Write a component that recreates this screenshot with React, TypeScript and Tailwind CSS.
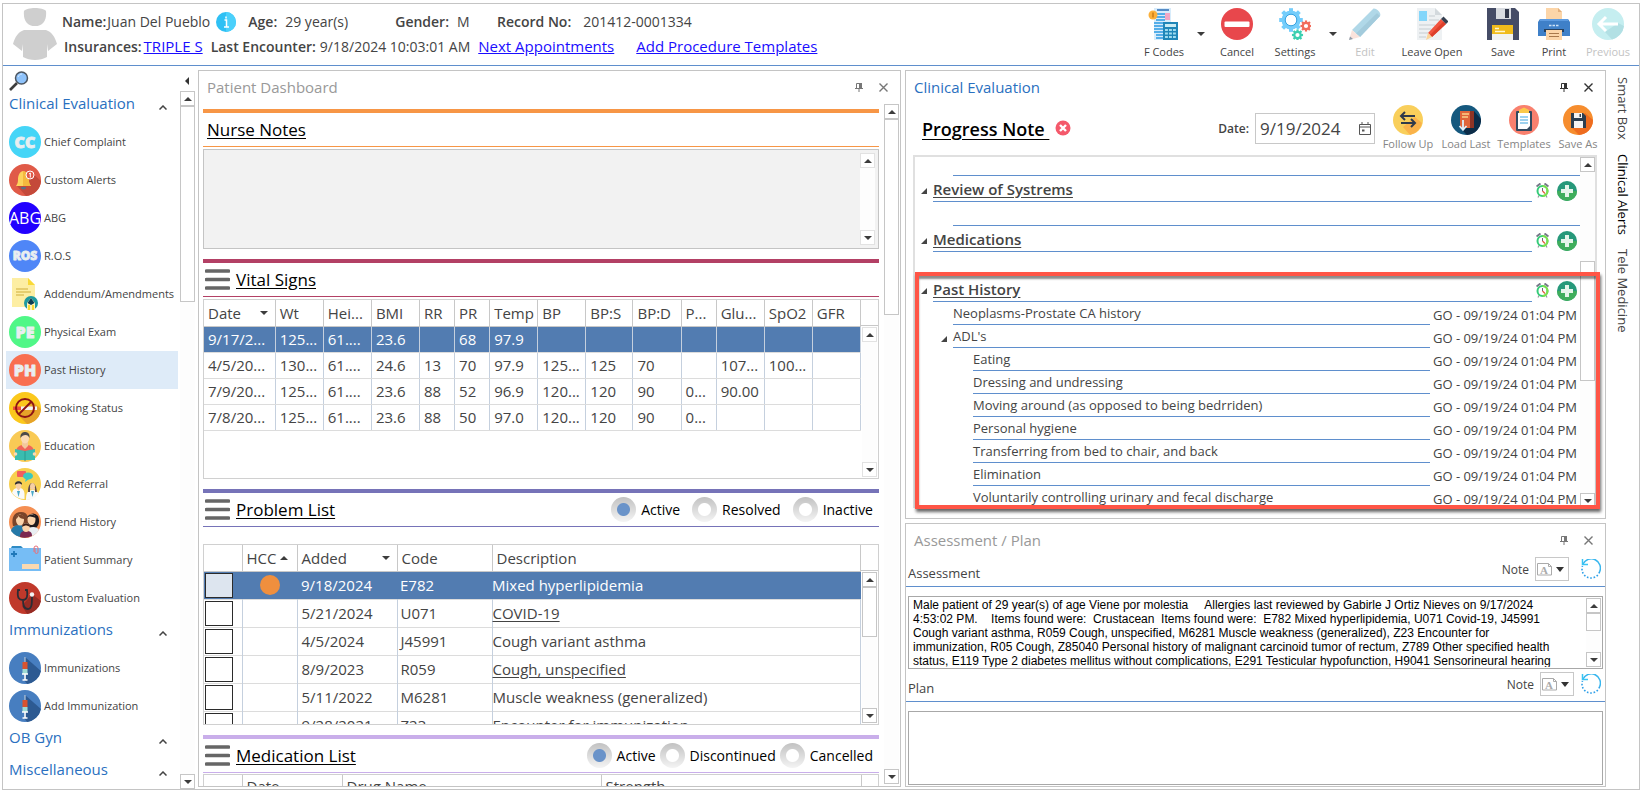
import React, { useState } from 'react';

const Dot: React.FC<{ fill: string; children?: React.ReactNode }> = ({ fill, children }) => (
  <svg viewBox="0 0 32 32" className="w-8 h-8 shrink-0">
    <circle cx="16" cy="16" r="16" fill={fill} />
    {children}
  </svg>
);

const LetterDot: React.FC<{ fill: string; text: string; size?: number; weight?: number; color?: string }> = ({ fill, text, size = 16, weight = 800, color = '#e9eef0' }) => (
  <Dot fill={fill}>
    <text
      x="16"
      y={16 + size * 0.36}
      textAnchor="middle"
      fontFamily="Open Sans, sans-serif"
      fontSize={size}
      fontWeight={weight}
      fill={color}
      stroke={color}
      strokeWidth={weight > 400 ? 0.8 : 0}
      strokeLinejoin="round"
    >
      {text}
    </text>
  </Dot>
);

const BellIcon = () => (
  <Dot fill="#e05a48">
    <path d="M8 22 L24 10 L32 17 A16 16 0 0 1 17 32 Z" fill="#c4493a" />
    <path d="M14 7c-4 1-5 5-5 9 0 3-1 4-2 6h15c-2-2-2-4-2-6 0-4-1-8-6-9z" fill="#fdd35c" />
    <path d="M14 7v15h8c-2-2-2-4-2-6 0-4-1-8-6-9z" fill="#f5b83e" />
    <path d="M12 23h5a2.500 2.500 0 0 1-5 0z" fill="#5a6f85" />
    <circle cx="21" cy="11" r="4" fill="#e05a48" stroke="#fff" strokeWidth="1" />
    <path d="M20 10l1.300-1v4.500" stroke="#fff" strokeWidth="1" fill="none" />
  </Dot>
);

const AddendumIcon = () => (
  <svg viewBox="0 0 32 32" className="w-8 h-8 shrink-0">
    <path d="M3 0h16l7 7v22H3z" fill="#fdeea3" />
    <path d="M19 0l7 7h-7z" fill="#f9d937" />
    <path d="M7 11h12M7 14h15M7 17h8" stroke="#cfae3c" strokeWidth="1.200" />
    <circle cx="22" cy="25" r="7" fill="#1f9aa0" />
    <path d="M18 32v-7l4-5 4 5v7z" fill="#fff3b8" />
    <path d="M18.500 25l3.500-5 3.500 5-3.500 2z" fill="#0e3e52" />
    <path d="M20 27v5M24 27v5" stroke="#f9d937" strokeWidth="2" />
  </svg>
);

const SmokingIcon = () => (
  <Dot fill="#fbc81c">
    <path d="M23 9l9 8a16 16 0 0 1-14 15l-8-8z" fill="#e6a329" />
    <rect x="4" y="14.500" width="8" height="3.500" fill="#f0503c" />
    <rect x="12" y="14.500" width="16" height="3.500" fill="#f4f4f4" />
    <circle cx="16" cy="16" r="9" fill="none" stroke="#8e1414" strokeWidth="2" />
    <path d="M22.500 9.500l-13 13" stroke="#8e1414" strokeWidth="2" />
  </Dot>
);

const EducationIcon = () => (
  <Dot fill="#f9ca55">
    <path d="M7 21c1-5 4-6 9-6s8 1 9 6z" fill="#f0645a" />
    <path d="M13 11h6v5l-3 3-3-3z" fill="#f3c79c" />
    <ellipse cx="16" cy="8.500" rx="4" ry="5" fill="#fbd9b5" />
    <path d="M11.500 8C11 3 14 2 16 2c3 0 5 2 4.500 6-1-2-2-3-4-3s-4 1-5 3z" fill="#4d4a4a" />
    <path d="M6 19l10 2 10-2v11H6z" fill="#3abdb0" />
    <path d="M16 21v10" stroke="#2a9a90" strokeWidth="1" />
    <circle cx="6.500" cy="24" r="1.800" fill="#fbd9b5" />
    <circle cx="25.500" cy="24" r="1.800" fill="#fbd9b5" />
  </Dot>
);

const ReferralIcon = () => (
  <Dot fill="#f8d04e">
    <rect x="8" y="3" width="9" height="6" rx="1" fill="#f25f5c" />
    <ellipse cx="19" cy="8" rx="5" ry="3.600" fill="#3cc9be" />
    <path d="M17 10l-1 4 4-3z" fill="#3cc9be" />
    <path d="M3 25c1-4 3-5 6.500-5s5.500 1 6 6v5A16 16 0 0 1 3 25z" fill="#fafafa" />
    <path d="M17 31c0-6 2-9 6.500-9 3 0 5 1 6 4A16 16 0 0 1 17 32z" fill="#fafafa" />
    <path d="M7 19h5l-2.500 4z" fill="#f6cfa5" />
    <ellipse cx="9.500" cy="17" rx="3" ry="3.800" fill="#f6cfa5" />
    <path d="M6 17c-1-5 8-5 7 0-1-2-5-2-7 0z" fill="#333" />
    <path d="M19 24c0-12 8-12 9 0h-2v-4h-5v4z" fill="#5d4a4c" />
    <ellipse cx="23.500" cy="18.500" rx="2.500" ry="3.500" fill="#f6cfa5" />
    <path d="M8 23l1.500 6 1.500-6zM22 23l1.500 6 1.500-6z" fill="#49a8c9" />
  </Dot>
);

const FriendIcon = () => (
  <Dot fill="#f58f52">
    <path d="M17 16a7 8 0 0 1 12-6c2 5 1 9-2 12h-9z" fill="#1f1a1d" />
    <path d="M4 20c-2-8 1-14 8-14s8 6 7 13z" fill="#7a4429" />
    <path d="M2 25c1-5 5-6 9-6s6 3 6 8v4A16 16 0 0 1 2 25z" fill="#2579a8" />
    <path d="M19 22c6-2 9-1 11 2a16 16 0 0 1-10 7z" fill="#e9eef2" />
    <ellipse cx="11" cy="14" rx="4" ry="5.500" fill="#fbd3aa" />
    <path d="M6.500 13c1-5 8-6 9 0-3 0-5-1-6-3-1 2-2 3-3 3z" fill="#7a4429" />
    <ellipse cx="22.500" cy="13.500" rx="4" ry="5.500" fill="#fbd3aa" />
    <path d="M18 12c1-4 7-5 9 0-4-1-6-3-9 0z" fill="#1f1a1d" />
    <path d="M11 31c0-5 2-6 6-6s6 1 6 5a16 16 0 0 1-12 1z" fill="#7c2850" />
    <ellipse cx="17" cy="21.500" rx="3.800" ry="4.500" fill="#fbd3aa" />
    <path d="M13 21c0-5 8-5 8 0-3-2-5-2-8 0z" fill="#3b1e16" />
  </Dot>
);

const SummaryIcon = () => (
  <svg viewBox="0 0 32 32" className="w-8 h-8 shrink-0">
    <path d="M2 4l1-2h9l2 2v3H2z" fill="#2f8bc4" />
    <rect x="0" y="4" width="32" height="23" fill="#76bdf5" />
    <path d="M5 7v6M2 10h6" stroke="#1f77b8" strokeWidth="1.800" />
    <rect x="13" y="20" width="17" height="5" fill="#fbd9b0" />
    <path d="M25 8V4a2 2 0 0 1 4 0v4a1.500 1.500 0 0 1-3 0V4" stroke="#e8707a" fill="none" strokeWidth="1" />
  </svg>
);

const StethoscopeIcon = () => (
  <Dot fill="#c0392b">
    <path d="M13 24l10-12 9 7a16 16 0 0 1-14 13z" fill="#962b23" />
    <path d="M11 8H9c-1 8 1 10 5 10s5-4 4-10h-2M14 18c0 6 1 9 5 9s4-6 4-13" fill="none" stroke="#2c2c34" strokeWidth="1.800" />
    <circle cx="23" cy="12.500" r="2.200" fill="#f3f3f3" />
  </Dot>
);

const SyringeIcon = () => (
  <Dot fill="#477ec0">
    <path d="M16 5l16 14a16 16 0 0 1-14 13l-3-4z" fill="#2d5a92" />
    <path d="M16 5v6" stroke="#cfd8e0" strokeWidth="1" />
    <rect x="13.500" y="10" width="5" height="7" fill="#d9532f" />
    <rect x="13.500" y="17" width="5" height="5" fill="#9fdad3" />
    <path d="M16 22v6M13.500 28h5M13 22h6" stroke="#fff" strokeWidth="1.600" />
  </Dot>
);

const sections = [
  {
    title: 'Clinical Evaluation',
    items: [
      { label: 'Chief Complaint', icon: <LetterDot fill="#45d5f7" text="CC" size={16} /> },
      { label: 'Custom Alerts', icon: <BellIcon /> },
      { label: 'ABG', icon: <LetterDot fill="#2200ff" text="ABG" size={16} weight={400} color="#fff" /> },
      { label: 'R.O.S', icon: <LetterDot fill="#4f86f7" text="ROS" size={12} /> },
      { label: 'Addendum/Amendments', icon: <AddendumIcon /> },
      { label: 'Physical Exam', icon: <LetterDot fill="#50f787" text="PE" size={16} /> },
      { label: 'Past History', icon: <LetterDot fill="#f96f50" text="PH" size={16} />, active: true },
      { label: 'Smoking Status', icon: <SmokingIcon /> },
      { label: 'Education', icon: <EducationIcon /> },
      { label: 'Add Referral', icon: <ReferralIcon /> },
      { label: 'Friend History', icon: <FriendIcon /> },
      { label: 'Patient Summary', icon: <SummaryIcon /> },
      { label: 'Custom Evaluation', icon: <StethoscopeIcon /> },
    ],
  },
  {
    title: 'Immunizations',
    items: [
      { label: 'Immunizations', icon: <SyringeIcon /> },
      { label: 'Add Immunization', icon: <SyringeIcon /> },
    ],
  },
  { title: 'OB Gyn', items: [] },
  { title: 'Miscellaneous', items: [] },
];

const vitalCols = [
  { name: 'Date', width: 'w-[71px]' },
  { name: 'Wt', width: 'w-12' },
  { name: 'Hei...', width: 'w-12' },
  { name: 'BMI', width: 'w-12' },
  { name: 'RR', width: 'w-[35px]' },
  { name: 'PR', width: 'w-[35px]' },
  { name: 'Temp', width: 'w-12' },
  { name: 'BP', width: 'w-12' },
  { name: 'BP:S', width: 'w-[47px]' },
  { name: 'BP:D', width: 'w-12' },
  { name: 'P...', width: 'w-[35px]' },
  { name: 'Glu...', width: 'w-12' },
  { name: 'SpO2', width: 'w-12' },
  { name: 'GFR', width: 'w-12' },
];

const vitals = [
  ['9/17/2...', '125...', '61....', '23.6', '', '68', '97.9', '', '', '', '', '', '', ''],
  ['4/5/20...', '130...', '61....', '24.6', '13', '70', '97.9', '125...', '125', '70', '', '107...', '100...', ''],
  ['7/9/20...', '125...', '61....', '23.6', '88', '52', '96.9', '120...', '120', '90', '0...', '90.00', '', ''],
  ['7/8/20...', '125...', '61....', '23.6', '88', '50', '97.0', '120...', '120', '90', '0...', '', '', ''],
];

const problems = [
  { added: '9/18/2024', code: 'E782', text: 'Mixed hyperlipidemia', hcc: true },
  { added: '5/21/2024', code: 'U071', text: 'COVID-19', link: true },
  { added: '4/5/2024', code: 'J45991', text: 'Cough variant asthma' },
  { added: '8/9/2023', code: 'R059', text: 'Cough, unspecified', link: true },
  { added: '5/11/2022', code: 'M6281', text: 'Muscle weakness (generalized)' },
  { added: '9/28/2021', code: 'Z23', text: 'Encounter for immunization' },
];

const historyRows = [
  { text: 'Neoplasms-Prostate CA history', level: 1 },
  { text: "ADL's", level: 1, open: true },
  { text: 'Eating', level: 2 },
  { text: 'Dressing and undressing', level: 2 },
  { text: 'Moving around (as opposed to being bedrriden)', level: 2 },
  { text: 'Personal hygiene', level: 2 },
  { text: 'Transferring from bed to chair, and back', level: 2 },
  { text: 'Elimination', level: 2 },
  { text: 'Voluntarily controlling urinary and fecal discharge', level: 2 },
];

const assessmentText = [
  'Male patient of 29 year(s) of age Viene por molestia     Allergies last reviewed by Gabirle J Ortiz Nieves on 9/17/2024',
  '4:53:02 PM.    Items found were:  Crustacean  Items found were:  E782 Mixed hyperlipidemia, U071 Covid-19, J45991',
  'Cough variant asthma, R059 Cough, unspecified, M6281 Muscle weakness (generalized), Z23 Encounter for',
  'immunization, R05 Cough, Z85040 Personal history of malignant carcinoid tumor of rectum, Z789 Other specified health',
  'status, E119 Type 2 diabetes mellitus without complications, E291 Testicular hypofunction, H9041 Sensorineural hearing',
].join('\n');

const Tri: React.FC<{ up?: boolean }> = ({ up }) => (
  <svg viewBox="0 0 8 4" className="w-2 h-1 shrink-0">
    <path d={up ? 'M0 4h8L4 0z' : 'M0 0h8L4 4z'} fill="#3c3c3c" />
  </svg>
);

const Corner = () => (
  <svg viewBox="0 0 6 6" className="w-1.5 h-1.5 shrink-0">
    <path d="M6 0v6H0z" fill="#444" />
  </svg>
);

// WPF looking scroll bar: two arrow buttons, optional thumb
const ScrollBar: React.FC<{ thumb?: string; offset?: string; light?: boolean }> = ({ thumb, offset = 'h-0', light }) => {
  const btn = `w-[15px] h-[15px] shrink-0 border flex items-center justify-center bg-white ${light ? 'border-[#e2e2e2]' : 'border-[#c6c6c6]'}`;
  return (
    <div className="w-[15px] shrink-0 flex flex-col bg-[#fdfdfd]">
      <button aria-label="Scroll up" className={btn}><Tri up /></button>
      <div className="flex-1 min-h-0 flex flex-col overflow-hidden">
        <div className={`shrink-0 ${offset}`} />
        {thumb && <div className={`shrink-0 border border-[#c6c6c6] bg-white ${thumb}`} />}
      </div>
      <button aria-label="Scroll down" className={btn}><Tri /></button>
    </div>
  );
};

const PanelTitle: React.FC<{ title: string; active?: boolean }> = ({ title, active }) => (
  <div className={`h-[33px] shrink-0 flex items-center pl-2 pr-3 ${active ? 'text-[#2a70c0]' : 'text-[#999]'}`}>
    <h2 className="flex-1 text-[15px]">{title}</h2>
    <div className={`flex gap-4 items-center ${active ? 'text-[#333]' : 'text-[#777]'}`}>
      <button aria-label="Pin">
        <svg viewBox="0 0 8 9" className="w-2 h-[9px]">
          <path d="M1.500 .5h5v5h-5zM0 5.500h8M4 5.500V9" fill="none" stroke="currentColor" />
          <path d="M4 0h3v6H4z" fill="currentColor" />
        </svg>
      </button>
      <button aria-label="Close">
        <svg viewBox="0 0 9 9" className="w-[9px] h-[9px]">
          <path d="M.5 .5l8 8M8.500 .5l-8 8" stroke="currentColor" strokeWidth="1.400" />
        </svg>
      </button>
    </div>
  </div>
);

const Radios: React.FC<{ name: string; options: string[]; gap: string }> = ({ name, options, gap }) => {
  const [value, setValue] = useState(options[0]);
  return (
    <div className={`flex items-center text-sm ${gap}`}>
      {options.map((o) => (
        <label key={o} className="flex items-center gap-[5px]">
          <input
            type="radio"
            name={name}
            checked={value === o}
            onChange={() => setValue(o)}
            className="appearance-none w-[25px] h-[25px] rounded-full bg-[radial-gradient(circle,#fff_6px,transparent_7px),linear-gradient(#c2c2c2,#f4f4f4)] checked:bg-[radial-gradient(circle,#6a93c9_6px,transparent_7px),linear-gradient(#c2c2c2,#f4f4f4)]"
          />
          {o}
        </label>
      ))}
    </div>
  );
};

const Section: React.FC<{ title: string; bar: string; line: string; menu?: boolean; extra?: React.ReactNode; children: React.ReactNode }> = ({ title, bar, line, menu, extra, children }) => (
  <section className="shrink-0">
    <div className={`h-1 ${bar}`} />
    <div className={`h-[34px] border-b flex items-center pr-1.5 ${line}`}>
      {menu && (
        <button aria-label={`${title} menu`} className="ml-0.5 mr-1.5">
          <svg viewBox="0 0 25 21" className="w-[25px] h-[21px]">
            <path d="M1.500 2h22M1.500 10.500h22M1.500 19h22" stroke="#666" strokeWidth="3.600" strokeLinecap="round" />
          </svg>
        </button>
      )}
      <h3 className={`flex-1 text-[17px] text-black underline underline-offset-2 ${menu ? '' : 'pl-1'}`}>{title}</h3>
      {extra}
    </div>
    {children}
  </section>
);

const ToolButton: React.FC<{ label: string; width: string; disabled?: boolean; children: React.ReactNode }> = ({ label, width, disabled, children }) => (
  <button disabled={disabled} className={`flex flex-col items-center gap-[3px] text-[11px] leading-[18px] whitespace-nowrap ${width} ${disabled ? 'text-[#c3c3c3]' : 'text-[#444]'}`}>
    <svg viewBox="0 0 32 32" className="w-8 h-8">{children}</svg>
    {label}
  </button>
);

const DropArrow = () => (
  <button aria-label="More" className="w-4 pt-6 flex justify-center"><Tri /></button>
);

const gearTeeth = (cx: number, cy: number, r: number, w: number) =>
  [0, 45, 90, 135, 180, 225, 270, 315].map((a) => (
    <rect key={a} x={cx - w / 2} y={cy - r - w * 0.7} width={w} height={w} transform={`rotate(${a} ${cx} ${cy})`} />
  ));

const Toolbar = () => (
  <div className="flex items-start pt-1 shrink-0">
    <ToolButton label="F Codes" width="w-[58px]">
      <path d="M6 0h17v32H6z" fill="#d8ecfb" />
      <path d="M9 2h12" stroke="#2d6cb5" strokeWidth="1.500" />
      <path d="M8 6h9M8 9h9M8 12h9M6 15h10M6 18h10M6 21h10M6 24h10M8 27h7M8 30h7" stroke="#55aee8" strokeWidth="1.800" />
      <path d="M17 5h5v7h-5z" fill="#f2a7c4" />
      <circle cx="5" cy="7" r="4.500" fill="#fbb03b" />
      <path d="M5 4.500v5" stroke="#c97812" strokeWidth="1.400" />
      <rect x="15" y="14" width="15" height="18" fill="#1f86b8" />
      <rect x="17" y="16" width="11" height="3" fill="#c9ecf5" />
      <path d="M17 22h11M17 25.500h11M17 29h11" stroke="#9fdcf0" strokeWidth="2.200" strokeDasharray="2.900 1.100" />
    </ToolButton>
    <DropArrow />
    <ToolButton label="Cancel" width="w-14">
      <circle cx="16" cy="16" r="16" fill="#e8474c" />
      <rect x="3.500" y="13.500" width="25" height="5.500" rx="1" fill="#fff" />
    </ToolButton>
    <ToolButton label="Settings" width="w-[60px]">
      <g fill="#74cdfb">{gearTeeth(12, 12, 9, 4)}</g>
      <circle cx="12" cy="12" r="7.500" fill="none" stroke="#74cdfb" strokeWidth="4" />
      <circle cx="12" cy="12" r="5.800" fill="none" stroke="#3ba3e0" strokeWidth="1" />
      <g fill="#f26b5b">{gearTeeth(27, 18, 4, 2.200)}</g>
      <circle cx="27" cy="18" r="3.200" fill="none" stroke="#f26b5b" strokeWidth="2.200" />
      <g fill="#3ccfb0">{gearTeeth(18.500, 27, 4, 2.200)}</g>
      <circle cx="18.500" cy="27" r="3.200" fill="none" stroke="#3ccfb0" strokeWidth="2.200" />
    </ToolButton>
    <DropArrow />
    <ToolButton label="Edit" width="w-12" disabled>
      <path d="M3 22L24 1c2-2 9 4 7 7L11 29z" fill="#b0d8e8" />
      <path d="M7 25.500L28 5l3 3-20 21z" fill="#a3cbdc" />
      <path d="M3 22l8 7-11 3z" fill="#fbe3dc" />
      <path d="M1 28.500L0 32l4-1z" fill="#8f9dab" />
    </ToolButton>
    <ToolButton label="Leave Open" width="w-[86px]">
      <path d="M1 0h18l7 7v25H1z" fill="#eef1f3" />
      <path d="M19 0l7 7h-7z" fill="#d3d9dd" />
      <rect x="3" y="3" width="8" height="10" fill="#84d6fa" />
      <path d="M13 8h6M13 12h10M3 17h16M3 21h12M3 25h9M3 29h7" stroke="#d3d9dd" strokeWidth="1.500" />
      <path d="M12 25L25 11l5 5-14 13z" fill="#f1543f" />
      <path d="M14 27L27.500 13.500 30 16 16 29z" fill="#dd3f2b" />
      <path d="M25 11l2.500-2.500 5 5L30 16z" fill="#354050" />
      <path d="M12 25l4 4-6 3z" fill="#fbd59a" />
    </ToolButton>
    <ToolButton label="Save" width="w-14">
      <path d="M0 0h28l4 4v28H0z" fill="#454c66" />
      <rect x="9" y="0" width="15" height="11" fill="#d8dbe0" />
      <rect x="18" y="1" width="4" height="9" fill="#2f3548" />
      <rect x="5" y="17" width="21" height="15" fill="#f2f2f2" />
      <rect x="5" y="17" width="21" height="9" fill="#f0bb1c" />
      <path d="M8 20.500h4M8 23.500h10" stroke="#fff6d2" strokeWidth="1.300" />
    </ToolButton>
    <ToolButton label="Print" width="w-[46px]">
      <path d="M8 0h12l4 4v9H8z" fill="#fcd5a8" />
      <path d="M20 0l4 4h-4z" fill="#e3b07d" />
      <path d="M2 11h28l2 3v14H0V14z" fill="#3f80c8" />
      <path d="M2 11h28v2H2z" fill="#5d9be0" />
      <path d="M11 17.500h10" stroke="#cfe2f7" strokeWidth="1.400" strokeDasharray="2.500 1" />
      <rect x="6" y="21" width="20" height="3" fill="#27415f" />
      <rect x="8" y="22" width="16" height="10" fill="#fcd5a8" />
      <path d="M11 25.500h10M11 28.500h10" stroke="#a9794c" strokeWidth="1.200" />
    </ToolButton>
    <ToolButton label="Previous" width="w-[62px]" disabled>
      <circle cx="16" cy="16" r="16" fill="#c5eef0" />
      <path d="M13 24l13-9 6 3a16 16 0 0 1-12 13.500z" fill="#b2e0e4" />
      <path d="M26 16H7M14 9l-7 7 7 7" stroke="#fff" strokeWidth="3" fill="none" />
    </ToolButton>
  </div>
);

const Header = () => (
  <header className="h-[62px] shrink-0 border-b border-[#5f8fcd] flex pl-[9px] text-sm text-[#444]">
    <svg viewBox="0 0 46 52" className="w-[46px] h-[52px] mt-1 shrink-0">
      <path d="M12 3c3-4 19-4 22 0 1 9-3 15-11 15S11 12 12 3z" fill="#cfcfcf" />
      <path d="M12 22h22c6 2 9 7 11 14l-9 7-1-7v13c-7 4-17 4-24 0V36l-1 7-9-7c2-7 5-12 11-14z" fill="#cfcfcf" />
    </svg>
    <div className="flex-1 pl-1 pt-[5px] whitespace-nowrap">
      <div className="flex items-center h-[26px]">
        <b className="font-semibold mr-px">Name:</b>
        <span>Juan Del Pueblo</span>
        <svg viewBox="0 0 20 20" className="w-5 h-5 ml-1.5 mr-3">
          <circle cx="10" cy="10" r="10" fill="#2fc0f4" />
          <path d="M10 0a10 10 0 0 1 0 20z" fill="#4bd0fb" />
          <path d="M8.500 8h2v7M8 15h5M10 4.500v2" stroke="#fff" strokeWidth="1.500" fill="none" />
        </svg>
        <b className="font-semibold mr-2">Age:</b>
        <span className="w-[110px]">29 year(s)</span>
        <b className="font-semibold mr-2">Gender:</b>
        <span className="w-10">M</span>
        <b className="font-semibold mr-3">Record No:</b>
        <span>201412-0001334</span>
      </div>
      <div className="flex items-center h-6 pl-0.5">
        <b className="font-semibold mr-0.5">Insurances:</b>
        <a href="#" className="text-[#1a0dff] text-[15px] underline mr-2">TRIPLE S</a>
        <b className="font-semibold mr-1">Last Encounter:</b>
        <span className="mr-2">9/18/2024 10:03:01 AM</span>
        <a href="#" className="text-[#1a0dff] text-[15px] underline mr-[22px]">Next Appointments</a>
        <a href="#" className="text-[#1a0dff] text-[15px] underline">Add Procedure Templates</a>
      </div>
    </div>
    <Toolbar />
  </header>
);

const Sidebar = () => (
  <nav className="w-[195px] shrink-0 flex flex-col overflow-hidden">
    <div className="h-[21px] shrink-0 flex items-center justify-between pl-1.5 pr-[9px]">
      <svg viewBox="0 0 20 20" className="w-5 h-5">
        <path d="M1 19l7-7" stroke="#3d3d3d" strokeWidth="2.600" />
        <circle cx="12.500" cy="7" r="6" fill="#8fc3fb" stroke="#4c5560" strokeWidth="1.500" />
        <path d="M9 6c1-2 2-3 4-3" stroke="#d7ebff" fill="none" />
      </svg>
      <button aria-label="Collapse">
        <svg viewBox="0 0 4 8" className="w-1 h-2"><path d="M4 0v8L0 4z" fill="#333" /></svg>
      </button>
    </div>
    <div className="flex-1 min-h-0 flex pr-[3px]">
      <div className="flex-1 overflow-hidden">
        {sections.map((s) => (
          <div key={s.title}>
            <button className="w-full h-8 flex items-center justify-between pl-1.5 pr-[13px] text-[15px] text-[#2a70c0]">
              <span className="pb-2">{s.title}</span>
              <svg viewBox="0 0 8 5" className="w-2 h-[5px]"><path d="M.5 4.500L4 1l3.500 3.500" fill="none" stroke="#444" strokeWidth="1.500" /></svg>
            </button>
            {s.items.map((item) => (
              <button
                key={item.label}
                className={`w-[172px] h-[38px] ml-[3px] pl-[3px] flex items-center gap-[3px] text-[11px] text-[#444] whitespace-nowrap ${'active' in item && item.active ? 'bg-[#deebf8]' : ''}`}
              >
                {item.icon}
                {item.label}
              </button>
            ))}
          </div>
        ))}
      </div>
      <ScrollBar thumb="h-[196px]" />
    </div>
  </nav>
);

const Dashboard = () => {
  const [checked, setChecked] = useState<Record<string, boolean>>({});

  return (
    <div className="flex-1 min-w-0 border border-[#c4c4c4] flex flex-col">
      <PanelTitle title="Patient Dashboard" />
      <div className="flex-1 min-h-0 flex gap-[5px] pl-1 pr-px">
        <div className="flex-1 min-w-0 flex flex-col gap-2.5 pt-[5px] overflow-hidden">
          <Section title="Nurse Notes" bar="bg-[#f79646]" line="border-[#f79646]">
            <div className="mt-0.5 h-[100px] border border-[#c4c4c4] bg-[#f2f2f2] flex py-[3px] pr-[3px]">
              <textarea aria-label="Nurse Notes" className="flex-1 resize-none outline-none" />
              <ScrollBar light />
            </div>
          </Section>

          <Section title="Vital Signs" bar="bg-[#b34065]" line="border-[#b34065]" menu>
            <div className="mt-0.5 h-[180px] border border-[#d0d0d0] flex">
              <div className="flex-1 min-w-0">
                <table className="w-full table-fixed border-collapse text-[15px] text-[#444]">
                  <thead>
                    <tr className="h-[26px]">
                      {vitalCols.map((c) => (
                        <th key={c.name} className={`p-0 pl-1 font-normal text-left border-r border-b border-[#c8c8c8] whitespace-nowrap overflow-hidden ${c.width}`}>
                          {c.name === 'Date' ? <span className="flex items-center justify-between pr-[7px]">Date <Tri /></span> : c.name}
                        </th>
                      ))}
                    </tr>
                  </thead>
                  <tbody>
                    {vitals.map((row, i) => (
                      <tr key={row[0]} className={`h-[26px] ${i === 0 ? 'bg-[#527cb1] text-white' : ''}`}>
                        {row.map((cell, j) => (
                          <td key={j} className="p-0 pl-1 border-r border-b border-r-[#c5d0de] border-b-[#dcdcdc] whitespace-nowrap overflow-hidden">{cell}</td>
                        ))}
                      </tr>
                    ))}
                  </tbody>
                </table>
              </div>
              <div className="w-[17px] flex flex-col">
                <div className="h-[26px] border-b border-[#c8c8c8] shrink-0" />
                <div className="flex-1 flex p-px"><ScrollBar light /></div>
              </div>
            </div>
          </Section>

          <Section
            title="Problem List"
            bar="bg-[#7673b8]"
            line="border-[#7673b8]"
            menu
            extra={<Radios name="problems" options={['Active', 'Resolved', 'Inactive']} gap="gap-3" />}
          >
            <div className="mt-[17px] h-[181px] border border-[#d0d0d0] flex">
              <div className="flex-1 min-w-0 overflow-hidden">
                <table className="w-full table-fixed border-collapse text-[15px] text-[#444]">
                  <thead>
                    <tr className="h-[26px] text-left">
                      <th aria-label="Select" className="w-[38px] p-0 border-r border-b border-[#c8c8c8]" />
                      <th className="w-[55px] p-0 pl-1 font-normal border-r border-b border-[#c8c8c8]"><span className="flex items-center gap-1">HCC <Tri up /></span></th>
                      <th className="w-[100px] p-0 pl-1 font-normal border-r border-b border-[#c8c8c8]"><span className="flex items-center justify-between pr-[7px]">Added <Tri /></span></th>
                      <th className="w-[95px] p-0 pl-1 font-normal border-r border-b border-[#c8c8c8]">Code</th>
                      <th className="p-0 pl-1 font-normal border-r border-b border-[#c8c8c8]">Description</th>
                    </tr>
                  </thead>
                  <tbody>
                    {problems.map((p, i) => (
                      <tr key={p.code} className={`h-7 border-b border-[#dcdcdc] ${i === 0 ? 'bg-[#527cb1] text-white' : '[&>td]:border-r [&>td]:border-r-[#c5d0de]'}`}>
                        <td className="p-0 pl-px">
                          <input
                            type="checkbox"
                            aria-label={`Select ${p.text}`}
                            checked={!!checked[p.code]}
                            onChange={() => setChecked({ ...checked, [p.code]: !checked[p.code] })}
                            className={`block appearance-none w-7 h-[25px] border border-[#2b2b2b] checked:bg-[#527cb1] ${i === 0 ? 'bg-[#dde5ef]' : 'bg-white'}`}
                          />
                        </td>
                        <td className="p-0">{p.hcc && <span className="block mx-auto w-5 h-5 rounded-full bg-[#f08f3e]" />}</td>
                        <td className="p-0 pl-1">{p.added}</td>
                        <td className="p-0 pl-[3px]">{p.code}</td>
                        <td className="p-0 whitespace-nowrap">{p.link ? <a href="#" className="underline underline-offset-2">{p.text}</a> : p.text}</td>
                      </tr>
                    ))}
                  </tbody>
                </table>
              </div>
              <div className="w-[17px] flex flex-col">
                <div className="h-[26px] border-b border-[#c8c8c8] shrink-0" />
                <div className="flex-1 flex p-px"><ScrollBar thumb="h-[50px]" /></div>
              </div>
            </div>
          </Section>

          <Section
            title="Medication List"
            bar="bg-[#c9aeea]"
            line="border-[#c9aeea]"
            menu
            extra={<Radios name="medications" options={['Active', 'Discontinued', 'Cancelled']} gap="gap-1" />}
          >
            <div className="mt-px h-[180px] border border-[#d0d0d0]">
              <table className="w-full table-fixed border-collapse text-[15px] leading-5 text-[#444] text-left">
                <thead>
                  <tr className="h-[22px]">
                    <th aria-label="Select" className="w-[38px] p-0 border-r border-[#c8c8c8]" />
                    <th className="w-[100px] p-0 pl-1 font-normal border-r border-[#c8c8c8]">Date</th>
                    <th className="w-[259px] p-0 pl-1 font-normal border-r border-[#c8c8c8]">Drug Name</th>
                    <th className="p-0 pl-1 font-normal border-r border-[#c8c8c8]">Strength</th>
                    <th aria-label="Scroll" className="w-[17px] p-0" />
                  </tr>
                </thead>
              </table>
            </div>
          </Section>
        </div>
        <div className="flex pb-0.5"><ScrollBar thumb="h-[196px]" /></div>
      </div>
    </div>
  );
};

const NoteButton: React.FC<{ label: string; width?: string; children: React.ReactNode }> = ({ label, width = 'w-[58px]', children }) => (
  <button className={`flex flex-col items-center text-[11px] leading-[18px] text-[#858585] whitespace-nowrap ${width}`}>
    <svg viewBox="0 0 30 30" className="w-[30px] h-[30px]">{children}</svg>
    {label}
  </button>
);

const SectionRow: React.FC<{ title: string }> = ({ title }) => (
  <div className="h-[26px] flex">
    <div className="w-[18px] flex items-center justify-end pr-1.5 pt-1"><Corner /></div>
    <div className="flex-1 border-b border-[#5f8fcd] flex items-center">
      <h4 className="font-semibold text-[15px] leading-5 underline underline-offset-2">{title}</h4>
    </div>
    <div className="w-12 flex items-center justify-end gap-2 pr-[3px] pt-[3px]">
      <svg viewBox="0 0 13 15" className="w-[13px] h-[15px]">
        <path d="M.5 3.500l4-3M12.500 3.500l-4-3" stroke="#778" strokeWidth="2" />
        <path d="M3 12.500l-1 2M10 12.500l1 2" stroke="#999" strokeWidth="1.200" />
        <circle cx="6.500" cy="8" r="5" fill="#fff" stroke="#35cc78" strokeWidth="2" />
        <path d="M6.500 3a5 5 0 0 1 0 10" fill="none" stroke="#7fe04a" strokeWidth="2" />
        <path d="M6.500 5v3" stroke="#667" fill="none" />
        <path d="M6.500 8l2.500 2.500" stroke="#e05a3c" strokeWidth="1.200" fill="none" />
      </svg>
      <button aria-label={`Add to ${title}`}>
        <svg viewBox="0 0 20 20" className="w-5 h-5 block">
          <circle cx="10" cy="10" r="10" fill="#27997a" />
          <path d="M0 10h20a10 10 0 0 1-20 0z" fill="#3fae5c" />
          <path d="M10 4v12M4 10h12" stroke="#e6f5ea" strokeWidth="4" />
        </svg>
      </button>
    </div>
  </div>
);

const ClinicalPanel = () => {
  const [date, setDate] = useState('9/19/2024');

  return (
    <div className="flex-1 min-h-0 border border-[#c4c4c4] flex flex-col">
      <PanelTitle title="Clinical Evaluation" active />
      <div className="h-[51px] shrink-0 flex items-start pl-4">
        <h1 className="text-lg leading-[50px] font-semibold text-black underline underline-offset-3 whitespace-pre">Progress Note </h1>
        <button aria-label="Remove note" className="pt-4 pl-1.5">
          <svg viewBox="0 0 16 16" className="w-4 h-4">
            <circle cx="8" cy="8" r="7.500" fill="#f4596b" />
            <path d="M5 5l6 6M11 5l-6 6" stroke="#fff" strokeWidth="2.400" />
          </svg>
        </button>
        <div className="flex-1" />
        <label htmlFor="note-date" className="text-xs font-semibold text-[#444] leading-[50px] mr-1.5">Date:</label>
        <div className="mt-[9px] w-[120px] h-[31px] border border-[#c8c8c8] flex items-center pl-1 pr-[3px]">
          <input id="note-date" value={date} onChange={(e) => setDate(e.target.value)} className="flex-1 min-w-0 text-[17px] text-[#444] outline-none" />
          <button aria-label="Open calendar">
            <svg viewBox="0 0 12 13" className="w-3 h-[13px]">
              <path d="M.5 2.500h11v10H.5zM.5 5h11M3 0v2.500M9 0v2.500" fill="none" stroke="#555" />
              <path d="M3 7.500h2.500v2H3z" fill="#555" />
            </svg>
          </button>
        </div>
        <div className="flex pl-1 pr-0.5 pt-px">
          <NoteButton label="Follow Up">
            <circle cx="15" cy="15" r="15" fill="#f9cf5b" />
            <path d="M10 22l12-10 7 6A15 15 0 0 1 17 30z" fill="#fab24a" />
            <path d="M22 11H9M12 7l-4 4 4 4M8 18h13M18 14l4 4-4 4" fill="none" stroke="#2f3a4a" strokeWidth="2" />
          </NoteButton>
          <NoteButton label="Load Last">
            <circle cx="15" cy="15" r="15" fill="#15587e" />
            <path d="M10 24L23 6l7 8a15 15 0 0 1-14 16z" fill="#0c2c48" />
            <rect x="9" y="6" width="13" height="17" fill="#e0653a" />
            <path d="M19 6h4v17h-4z" fill="#8f3425" />
            <path d="M11 9h7M11 12h6" stroke="#fcd28a" strokeWidth="1.400" />
            <path d="M12 15v9M8.500 21l3.500 4 3.500-4" stroke="#dff0fb" strokeWidth="1.800" fill="none" />
          </NoteButton>
          <NoteButton label="Templates">
            <circle cx="15" cy="15" r="15" fill="#f9806e" />
            <rect x="7" y="6" width="16" height="20" rx="1" fill="#34495e" />
            <path d="M9 8h12v13l-3 3H9z" fill="#fff" />
            <path d="M11 12h8M11 15h8M11 18h8" stroke="#7fc4ea" strokeWidth="1.300" />
            <path d="M10 8V5l5-2.500L20 5v3z" fill="#fbc94a" />
          </NoteButton>
          <NoteButton label="Save As" width="w-[50px]">
            <circle cx="15" cy="15" r="15" fill="#f68d2e" />
            <path d="M8 22L22 8l8 7a15 15 0 0 1-14 15z" fill="#ee6c1f" />
            <path d="M8 8h12l3 3v12H8z" fill="#2c3e50" />
            <path d="M11 8h8v5h-8zM11 16h9v7h-9z" fill="#f4f4f4" />
            <path d="M16.500 9h1.500v3h-1.500z" fill="#2c3e50" />
          </NoteButton>
        </div>
      </div>

      <div className="relative flex-1 min-h-0 ml-[7px] mr-2 mb-2.5 border-2 border-[#e0e0e0] border-b-0 flex text-[#444]">
        <div className="flex-1 min-w-0 overflow-hidden">
          <div className="h-[19px] ml-[38px] border-b border-[#5f8fcd]" />
          <SectionRow title="Review of Systrems" />
          <div className="h-6 ml-[38px] border-b border-[#5f8fcd]" />
          <SectionRow title="Medications" />
          <div className="h-6 ml-[38px] border-b border-[#5f8fcd]" />
          <SectionRow title="Past History" />
          {historyRows.map((row) => (
            <div key={row.text} className={`h-[23px] flex text-[13px] whitespace-nowrap ${row.level === 1 ? 'pl-[26px]' : 'pl-[46px]'}`}>
              <div className="w-3 flex items-center pt-1">{row.open && <Corner />}</div>
              <div className="flex-1 min-w-0 border-b border-[#5f8fcd] pt-px flex items-center">{row.text}</div>
              <div className="w-[150px] pr-[3px] pt-1 flex items-center justify-end">GO - 09/19/24 01:04 PM</div>
            </div>
          ))}
        </div>
        <ScrollBar thumb="h-[120px]" offset="h-[89px]" />
        {/* highlighted group */}
        <div className="absolute left-0 -right-[5px] top-[115px] -bottom-px border-4 border-[#ff5546] shadow-[1px_3px_3px_rgba(0,0,0,0.6),inset_0_3px_2px_rgba(0,0,0,0.45)] pointer-events-none" />
      </div>
    </div>
  );
};

const NoteHeader: React.FC<{ title: string; id: string; narrow?: boolean }> = ({ title, id, narrow }) => (
  <div className="h-[30px] shrink-0 border-b border-[#5f8fcd] flex items-start pl-0.5 pr-1 text-[#444]">
    <label htmlFor={id} className="flex-1 text-[13px] leading-[33px]">{title}</label>
    <label htmlFor={`${id}-note`} className="text-xs leading-[26px] mr-1.5">Note</label>
    <div className={`relative w-[34px] h-6 border border-[#c8c8c8] ${narrow ? 'mr-[7px]' : 'mr-3'}`}>
      <select id={`${id}-note`} className="appearance-none w-full h-full outline-none" />
      <svg viewBox="0 0 32 22" className="absolute inset-0 w-8 h-[22px] pointer-events-none">
        <path d="M1.500 5.500h11l3 3v8.500h-14zM12.500 5.500v3h3" fill="none" stroke="#aaa" />
        <text x="8" y="15.500" textAnchor="middle" fontFamily="Liberation Serif, serif" fontSize="11" fontWeight="700" fill="#aaa">A</text>
        <path d="M20 9h8l-4 5z" fill="#333" />
      </svg>
    </div>
    <button aria-label={`Refresh ${title}`} className="pt-0.5">
      <svg viewBox="0 0 20 20" className="w-5 h-5">
        <path d="M2 5a9 9 0 0 1 16.500 8" fill="none" stroke="#38b6ee" strokeWidth="1.500" />
        <path d="M18.500 13A9 9 0 0 1 1.500 7" fill="none" stroke="#2e9fe8" strokeWidth="1.600" strokeDasharray="1.600 1.800" />
        <path d="M1.500 0v5.500H7" fill="none" stroke="#38c4f4" strokeWidth="1.500" />
      </svg>
    </button>
  </div>
);

const AssessmentPanel = () => {
  const [assessment, setAssessment] = useState(assessmentText);
  const [plan, setPlan] = useState('');

  return (
    <div className="shrink-0 border border-[#c4c4c4] flex flex-col pb-px">
      <PanelTitle title="Assessment / Plan" />
      <NoteHeader title="Assessment" id="assessment" />
      <div className="mt-[9px] mx-0.5 h-[73px] border border-[#a8a8a8] flex p-px">
        <textarea
          id="assessment"
          value={assessment}
          onChange={(e) => setAssessment(e.target.value)}
          className="flex-1 resize-none outline-none overflow-hidden pl-[3px] font-['Liberation_Sans',Arial,sans-serif] text-xs leading-[14px] text-black"
        />
        <ScrollBar thumb="h-[18px]" />
      </div>
      <div className="h-[3px]" />
      <NoteHeader title="Plan" id="plan" narrow />
      <textarea
        id="plan"
        value={plan}
        onChange={(e) => setPlan(e.target.value)}
        className="mt-[9px] mx-0.5 h-[74px] border border-[#a8a8a8] resize-none outline-none px-1 text-xs"
      />
    </div>
  );
};

export default function App() {
  return (
    <div className="h-screen bg-white pt-[3px] pr-1 pb-[3px] pl-0.5 font-['Open_Sans','Noto_Sans',sans-serif]">
      <div className="h-full border border-[#c4c4c4] flex flex-col overflow-hidden">
        <Header />
        <main className="flex-1 min-h-0 flex pt-1">
          <Sidebar />
          <div className="flex-1 min-w-0 flex gap-1 pb-0.5">
            <Dashboard />
            <div className="flex-1 min-w-0 flex flex-col gap-1">
              <ClinicalPanel />
              <AssessmentPanel />
            </div>
          </div>
          <div className="w-[33px] shrink-0 pt-[7px] flex flex-col items-center gap-3.5 text-[13px] leading-5 text-[#444] whitespace-nowrap">
            <button className="[writing-mode:vertical-rl]">Smart Box</button>
            <button className="[writing-mode:vertical-rl] text-black">Clinical Alerts</button>
            <button className="[writing-mode:vertical-rl]">Tele Medicine</button>
          </div>
        </main>
      </div>
    </div>
  );
}
